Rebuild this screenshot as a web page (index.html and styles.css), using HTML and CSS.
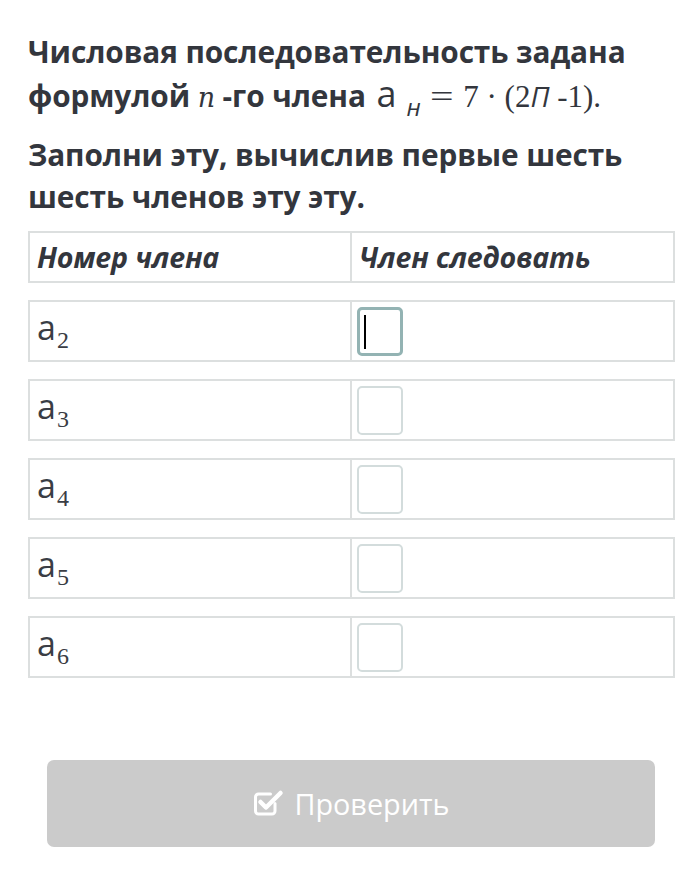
FILE: index.html
```html
<!DOCTYPE html>
<html lang="ru">
<head>
<meta charset="utf-8">
<link rel="stylesheet" href="styles.css">
</head>
<body>
<div class="page">
  <p class="q">Числовая последовательность задана формулой <span class="mi">n</span> -го члена <span class="fm"><span class="va">a</span><span class="sub-h">н</span><span class="mr eq">=</span><span class="mr">7 · (2</span><span class="pi">П</span><span class="mr"> -1).</span></span></p>
  <p class="q q2">Заполни эту, вычислив первые шесть шесть членов эту эту.</p>

  <div class="table">
    <div class="row head">
      <div class="cell">Номер члена</div>
      <div class="cell">Член следовать</div>
    </div>
    <div class="row">
      <div class="cell"><span class="m"><span class="va">a</span><span class="sub">2</span></span></div>
      <div class="cell"><div class="box focus"><span class="caret"></span></div></div>
    </div>
    <div class="row">
      <div class="cell"><span class="m"><span class="va">a</span><span class="sub">3</span></span></div>
      <div class="cell"><div class="box"></div></div>
    </div>
    <div class="row">
      <div class="cell"><span class="m"><span class="va">a</span><span class="sub">4</span></span></div>
      <div class="cell"><div class="box"></div></div>
    </div>
    <div class="row">
      <div class="cell"><span class="m"><span class="va">a</span><span class="sub">5</span></span></div>
      <div class="cell"><div class="box"></div></div>
    </div>
    <div class="row">
      <div class="cell"><span class="m"><span class="va">a</span><span class="sub">6</span></span></div>
      <div class="cell"><div class="box"></div></div>
    </div>
  </div>

  <div class="btn-wrap">
    <div class="btn">
      <svg class="ico" width="32" height="30" viewBox="0 0 32 30">
        <path d="M23 15.5V23a3 3 0 0 1-3 3H6.5a3 3 0 0 1-3-3V9a3 3 0 0 1 3-3h12" fill="none" stroke="#fff" stroke-width="3" stroke-linecap="round"/>
        <path d="M8.5 14l5.5 5.5L28.5 5" fill="none" stroke="#fff" stroke-width="4.5" stroke-linecap="round" stroke-linejoin="round"/>
      </svg>
      <span>Проверить</span>
    </div>
  </div>
</div>
</body>
</html>
```
FILE: styles.css
```css
html, body {
  margin: 0;
  padding: 0;
  background: #fff;
}
body {
  font-family: "Open Sans", "Noto Sans", sans-serif;
  color: #33363d;
}
.page {
  padding: 30px 17px 0 28px;
}
.q {
  margin: 0;
  font-size: 29.8px;
  font-weight: 700;
  line-height: 44px;
  letter-spacing: -0.1px;
}
.q2 {
  margin-top: 16px;
  line-height: 42px;
}
.mi {
  font-family: "DejaVu Serif", "Liberation Serif", serif;
  font-style: italic;
  font-weight: 400;
  font-size: 27px;
  line-height: 1;
}
.fm {
  line-height: 1;
  letter-spacing: 0;
  margin-left: 3px;
}
.fm .va {
  font-family: "Open Sans", sans-serif;
  font-weight: 400;
  font-size: 36px;
}
.sub-h {
  font-style: italic;
  font-weight: 400;
  font-size: 24px;
  position: relative;
  top: 9px;
  margin-left: 10px;
}
.mr {
  font-family: "Liberation Serif", serif;
  font-weight: 400;
  font-size: 31px;
}
.eq {
  display: inline-block;
  transform: scaleX(1.35);
  margin: 0 13px 0 12px;
}
.pi {
  font-style: italic;
  font-weight: 400;
  font-size: 28px;
}
.table {
  margin-top: 13px;
  display: flex;
  flex-direction: column;
  gap: 17px;
}
.row {
  display: grid;
  grid-template-columns: 320px 1fr;
  border: 2px solid #dcdfdf;
  height: 62px;
  box-sizing: border-box;
}
.row.head {
  height: 52px;
}
.cell {
  display: flex;
  align-items: center;
  padding-left: 7px;
}
.cell + .cell {
  border-left: 2px solid #dcdfdf;
  padding-left: 5px;
}
.head .cell {
  font-style: italic;
  font-weight: 700;
  font-size: 28.6px;
  letter-spacing: -0.2px;
  padding-bottom: 2px;
}
.head .cell + .cell {
  padding-left: 7px;
}
.row:not(.head) .cell:first-child {
  align-items: flex-start;
  padding-top: 0;
}
.m {
  display: inline-block;
  line-height: 50px;
  white-space: nowrap;
}
.m .va {
  font-family: "Open Sans", sans-serif;
  font-size: 34px;
  color: #3a3d44;
}
.sub {
  font-family: "Liberation Serif", serif;
  font-size: 24px;
  position: relative;
  top: 8px;
  margin-left: 1px;
  color: #3a3d44;
}
.box {
  width: 46px;
  height: 49px;
  box-sizing: border-box;
  border: 2px solid #d3dcdc;
  border-radius: 5px;
  position: relative;
}
.box.focus {
  border: 3px solid #93b3b3;
}
.caret {
  position: absolute;
  left: 4px;
  top: 5px;
  width: 2px;
  height: 34px;
  background: #000;
}
.btn-wrap {
  padding: 82px 20px 0 19px;
}
.btn {
  height: 87px;
  background: #cbcbcb;
  border-radius: 7px;
  display: flex;
  align-items: center;
  justify-content: center;
  gap: 10px;
  color: #fff;
  font-size: 28.8px;
  font-weight: 400;
}
.ico {
  display: block;
  margin-top: -2px;
}
```
